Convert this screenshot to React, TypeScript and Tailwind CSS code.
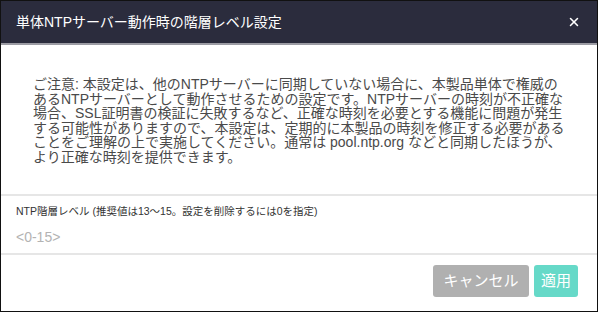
import { X } from 'lucide-react';

const font = '[font-family:"Liberation_Sans","Noto_Sans_CJK_JP",sans-serif]';

export default function App() {
  return (
    <div className={`w-[598px] h-[312px] bg-white border border-[#111] flex flex-col ${font}`}>
      {/* Header */}
      <div className="h-[44px] shrink-0 bg-[#2b2c3d] flex items-center justify-between pl-[15px] pr-[16px] border-b-2 border-[#9c9ca4]">
        <h2 className="text-[14px] text-white leading-none">単体NTPサーバー動作時の階層レベル設定</h2>
        <button className="text-white">
          <X size={14} strokeWidth={2.6} />
        </button>
      </div>

      {/* Notice */}
      <div className="h-[151px] shrink-0 flex items-center px-[32px] pt-[2px] border-b-2 border-[#e6e6e6]">
        <p className="text-[14px] leading-[14.5px] text-[#4a4a4a] whitespace-nowrap">
          ご注意: 本設定は、他のNTPサーバーに同期していない場合に、本製品単体で権威の
          <br />
          あるNTPサーバーとして動作させるための設定です。NTPサーバーの時刻が不正確な
          <br />
          場合、SSL証明書の検証に失敗するなど、正確な時刻を必要とする機能に問題が発生
          <br />
          する可能性がありますので、本設定は、定期的に本製品の時刻を修正する必要がある
          <br />
          ことをご理解の上で実施してください。通常は pool.ntp.org などと同期したほうが、
          <br />
          より正確な時刻を提供できます。
        </p>
      </div>

      {/* Field */}
      <div className="h-[59px] shrink-0 px-[15px] pt-[8px] border-b-2 border-[#e6e6e6]">
        <label className="block text-[10.5px] leading-[14px] text-[#333]">
          NTP階層レベル (推奨値は13〜15。設定を削除するには0を指定)
        </label>
        <input
          className="mt-[10px] w-full text-[14px] leading-[18px] text-[#333] placeholder:text-[#b3b3b3] outline-none"
          placeholder="<0-15>"
        />
      </div>

      {/* Footer */}
      <div className="flex-1 flex items-start justify-end gap-[5px] pt-[10px] pr-[19px]">
        <button className="h-[32px] w-[96px] rounded-[3px] bg-[#b0b0b0] text-white text-[15px]">
          キャンセル
        </button>
        <button className="h-[32px] w-[44px] rounded-[3px] bg-[#66d9c8] text-white text-[15px]">
          適用
        </button>
      </div>
    </div>
  );
}
